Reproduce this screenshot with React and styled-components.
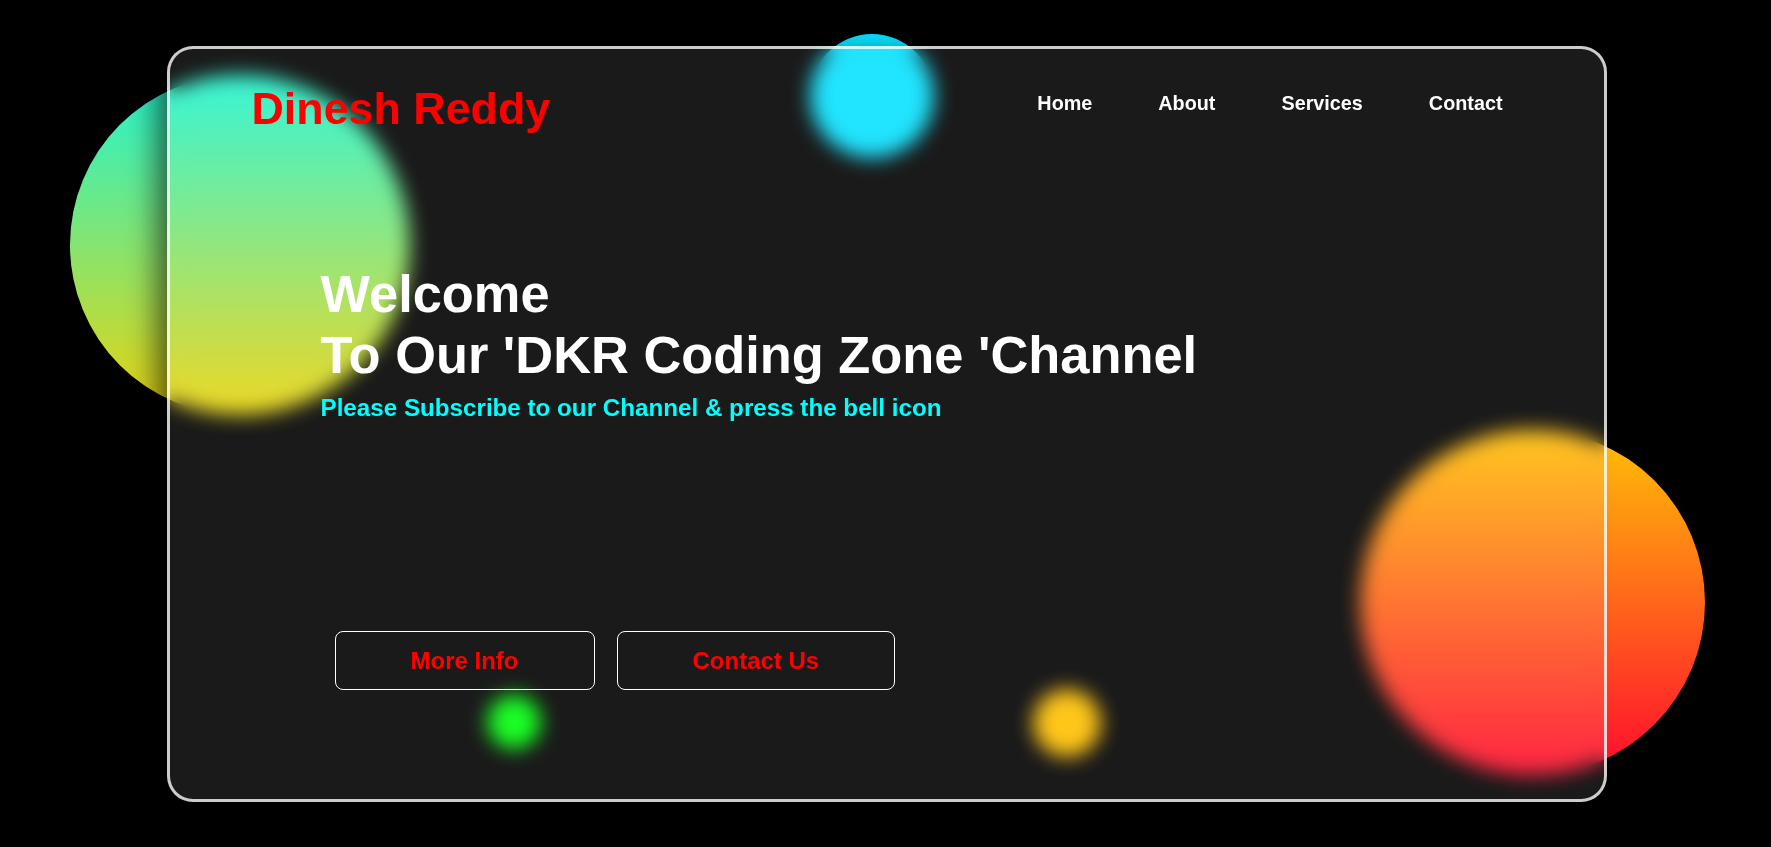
import React from "react";
import styled, { createGlobalStyle } from "styled-components";

const GlobalStyle = createGlobalStyle`
  * {
    margin: 0;
    padding: 0;
    box-sizing: border-box;
  }
  body {
    background: #000;
    font-family: "Liberation Sans", Arial, sans-serif;
  }
`;

// decorative colour blobs sitting behind the glass card
const orbs = [
  { id: "mint", size: 340, top: 75, left: 70, bg: "linear-gradient(#1ff5d3, #ecd30c)" },
  { id: "sky", size: 124, top: 34, left: 810, bg: "#08e1ff" },
  { id: "sun", size: 345, top: 430, left: 1360, bg: "linear-gradient(#ffc107, #ff0b2e)" },
  { id: "lime", size: 54, top: 695, left: 487, bg: "#00ff0c" },
  { id: "amber", size: 68, top: 689, left: 1033, bg: "#ffc000" },
];

const links = ["Home", "About", "Services", "Contact"];

export default function App() {
  return (
    <>
      <GlobalStyle />
      <Scene>
        {orbs.map((orb) => (
          <Orb
            key={orb.id}
            $size={orb.size}
            $top={orb.top}
            $left={orb.left}
            $bg={orb.bg}
          />
        ))}
        <GlassCard>
          <Header>
            <Logo>Dinesh Reddy</Logo>
            <Nav>
              {links.map((link) => (
                <NavLink href="#" key={link}>
                  {link}
                </NavLink>
              ))}
            </Nav>
          </Header>
          <Hero>
            <Title>
              Welcome
              <br />
              To Our 'DKR Coding Zone 'Channel
            </Title>
            <Subtitle>Please Subscribe to our Channel &amp; press the bell icon</Subtitle>
            <Actions>
              <OutlineButton>More Info</OutlineButton>
              <OutlineButton>Contact Us</OutlineButton>
            </Actions>
          </Hero>
        </GlassCard>
      </Scene>
    </>
  );
}

const Scene = styled.main`
  position: relative;
  width: 100vw;
  height: 100vh;
  overflow: hidden;
  background: #000;
  display: flex;
  align-items: center;
  justify-content: center;
  padding-left: 2px;
`;

const Orb = styled.div`
  position: absolute;
  top: ${(p) => p.$top}px;
  left: ${(p) => p.$left}px;
  width: ${(p) => p.$size}px;
  height: ${(p) => p.$size}px;
  border-radius: 50%;
  background: ${(p) => p.$bg};
`;

const GlassCard = styled.section`
  position: relative;
  z-index: 1;
  width: 1440px;
  height: 756px;
  border: 3px solid rgba(255, 255, 255, 0.78);
  border-radius: 26px;
  background: rgba(255, 255, 255, 0.1);
  backdrop-filter: blur(10px);
  box-shadow: -20px 0 30px -10px rgba(0, 0, 0, 0.6);
  display: flex;
  flex-direction: column;
`;

const Header = styled.header`
  display: flex;
  justify-content: space-between;
  align-items: flex-start;
  padding: 34px 101px 0 82px;
`;

const Logo = styled.h2`
  font-size: 44.8px;
  line-height: 50px;
  font-weight: 700;
  color: #ff0000;
`;

const Nav = styled.nav`
  display: flex;
  gap: 66px;
  margin-top: 9px;
`;

const NavLink = styled.a`
  font-size: 19.8px;
  line-height: 23px;
  font-weight: 700;
  color: #fff;
  text-decoration: none;
`;

const Hero = styled.div`
  display: flex;
  flex-direction: column;
  align-items: flex-start;
  margin-top: 131px;
  padding-left: 151px;
`;

const Title = styled.h1`
  font-size: 52.4px;
  line-height: 61px;
  font-weight: 700;
  color: #fff;
`;

const Subtitle = styled.p`
  margin-top: 8px;
  font-size: 24.2px;
  line-height: 28px;
  font-weight: 700;
  color: #00ffff;
`;

const Actions = styled.div`
  display: flex;
  gap: 22px;
  margin-top: 209px;
  margin-left: 14px;
`;

const OutlineButton = styled.button`
  padding: 15px 75px;
  font-family: inherit;
  font-size: 24px;
  line-height: 27px;
  font-weight: 700;
  color: #ff0000;
  background: transparent;
  border: 1px solid #fff;
  border-radius: 8px;
  cursor: pointer;
`;
